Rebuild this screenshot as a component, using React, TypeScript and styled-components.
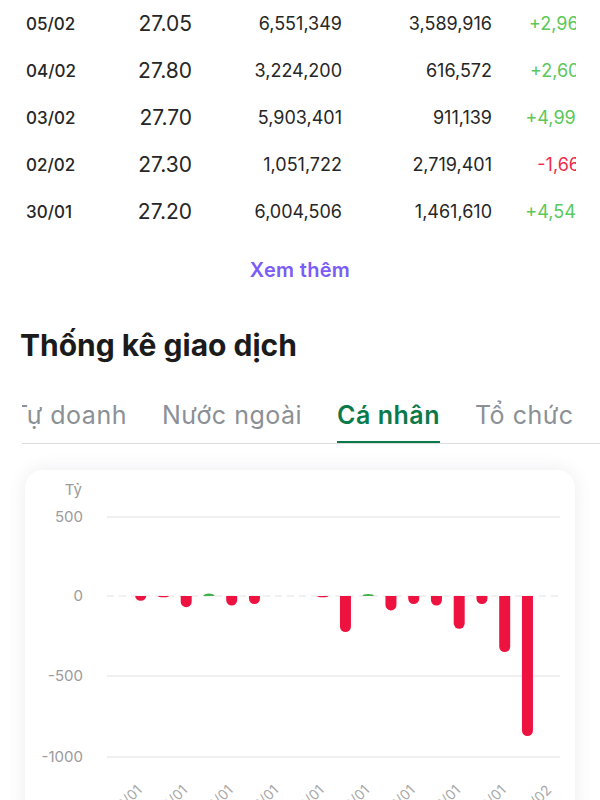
import React from "react";
import styled, { createGlobalStyle } from "styled-components";

const GlobalStyle = createGlobalStyle`
  body {
    margin: 0;
    background: #fff;
    font-family: Inter, "Noto Sans", sans-serif;
    color: #222;
  }
`;

const Page = styled.main`
  width: 600px;
  overflow: hidden;
`;

const TableScroll = styled.div`
  margin-right: 24px;
  padding-left: 26px;
  overflow: hidden;
`;

const Grid = styled.div`
  display: grid;
  grid-template-columns: 60px 106px 150px 150px 133px;
  width: 599px;
`;

const Row = styled.div`
  display: contents;
`;

const Cell = styled.div<{ $tone?: "up" | "down"; $big?: boolean; $left?: boolean }>`
  height: 47px;
  display: flex;
  align-items: center;
  justify-content: ${({ $left }) => ($left ? "flex-start" : "flex-end")};
  white-space: nowrap;
  font-size: ${({ $big, $left }) => ($big ? "21px" : $left ? "17px" : "18px")};
  font-weight: ${({ $left }) => ($left ? 500 : 400)};
  color: ${({ $tone }) =>
    $tone === "up" ? "#5ac85a" : $tone === "down" ? "#ef2b4b" : "#262626"};
`;

const More = styled.button`
  display: block;
  margin: 23px auto 0;
  border: 0;
  background: none;
  padding: 0;
  font-family: inherit;
  font-size: 20px;
  line-height: 24px;
  letter-spacing: 0.3px;
  font-weight: 600;
  color: #7b5cf6;
`;

const Title = styled.h2`
  margin: 45px 0 0 20px;
  font-size: 30px;
  line-height: 36px;
  font-weight: 700;
  color: #1b1b1b;
`;

const TabsScroll = styled.div`
  margin: 37px 0 0 22px;
  overflow: hidden;
  border-bottom: 1px solid #dcdcdc;
`;

// $scroll: how far the strip is scrolled to the left
const TabTrack = styled.div<{ $scroll: number }>`
  display: flex;
  gap: 35px;
  width: max-content;
  transform: translateX(-${({ $scroll }) => $scroll}px);
`;

const Tab = styled.div<{ $active?: boolean }>`
  position: relative;
  padding-bottom: 13px;
  font-size: 25px;
  line-height: 30px;
  letter-spacing: 0.5px;
  white-space: nowrap;
  font-weight: ${({ $active }) => ($active ? 600 : 400)};
  color: ${({ $active }) => ($active ? "#0b7a4b" : "#8b9096")};

  &::after {
    content: "";
    position: absolute;
    left: 0;
    right: 0;
    bottom: 0;
    height: 2px;
    background: ${({ $active }) => ($active ? "#0b7a4b" : "transparent")};
  }
`;

const Card = styled.section`
  margin: 26px 25px 0;
  height: 360px;
  background: #fff;
  border-radius: 18px;
  box-shadow: 0 0 20px rgba(20, 30, 60, 0.08);
  overflow: hidden;
`;

const rows = [
  ["05/02", "27.05", "6,551,349", "3,589,916", "+2,961,433"],
  ["04/02", "27.80", "3,224,200", "616,572", "+2,607,628"],
  ["03/02", "27.70", "5,903,401", "911,139", "+4,992,262"],
  ["02/02", "27.30", "1,051,722", "2,719,401", "-1,667,679"],
  ["30/01", "27.20", "6,004,506", "1,461,610", "+4,542,896"],
];

const tabs = ["Tự doanh", "Nước ngoài", "Cá nhân", "Tổ chức"];

// net value per day (tỷ), oldest first
const values = [-30, -8, -70, 15, -60, -50, 0, 0, -8, -225, 12, -90, -50, -60, -205, -50, -350, -875, 0];
const dates = ["08/01", "12/01", "14/01", "16/01", "20/01", "22/01", "26/01", "28/01", "30/01", "03/02", "05/02"];

const Y0 = 126;
const SCALE = 80 / 500;
const slotX = (i: number) => 115.7 + 22.75 * i;

function barPath(cx: number, v: number, w = 11) {
  const r = w / 2;
  const h = Math.abs(v) * SCALE;
  const dir = v < 0 ? 1 : -1;
  const sweep = v < 0 ? 0 : 1;
  if (h < r) {
    return `M${cx - r} ${Y0} A${r} ${h} 0 0 ${sweep} ${cx + r} ${Y0} Z`;
  }
  const yb = Y0 + dir * (h - r);
  return `M${cx - r} ${Y0} V${yb} A${r} ${r} 0 0 ${sweep} ${cx + r} ${yb} V${Y0} Z`;
}

const Chart: React.FC = () => {
  const ticks = [
    { label: "500", y: 47 },
    { label: "0", y: Y0 },
    { label: "-500", y: 206 },
    { label: "-1000", y: 287 },
  ];
  return (
    <svg width="550" height="360" viewBox="0 0 550 360">
      <text x="57" y="25" textAnchor="end" fontSize="15" fill="#9b9b9b">Tỷ</text>
      {ticks.map((t) => (
        <g key={t.label}>
          <text x="58" y={t.y + 5} textAnchor="end" fontSize="15" fill="#9b9b9b">
            {t.label}
          </text>
          <line
            x1="82"
            x2="535"
            y1={t.y}
            y2={t.y}
            stroke="#ebebeb"
            strokeWidth="1.5"
            strokeDasharray={t.label === "0" ? "7 5" : undefined}
          />
        </g>
      ))}
      {values.map((v, i) =>
        v === 0 ? null : (
          <path key={i} d={barPath(slotX(i), v)} fill={v < 0 ? "#ee1241" : "#3fb04a"} />
        )
      )}
      {values.map((_, i) => {
        if (i % 2 !== 0) return null;
        const x = slotX(i) + 2;
        const y = 321;
        return (
          <text
            key={"d" + i}
            x={x}
            y={y}
            textAnchor="end"
            fontSize="14"
            fill="#a8a8a8"
            transform={`rotate(-45 ${x} ${y})`}
          >
            {dates[i / 2]}
          </text>
        );
      })}
    </svg>
  );
};

const App: React.FC = () => {
  return (
    <Page>
      <GlobalStyle />
      <TableScroll>
        <Grid>
          {rows.map((r) => (
            <Row key={r[0]}>
              <Cell $left>{r[0]}</Cell>
              <Cell $big>{r[1]}</Cell>
              <Cell>{r[2]}</Cell>
              <Cell>{r[3]}</Cell>
              <Cell $tone={r[4].startsWith("-") ? "down" : "up"}>{r[4]}</Cell>
            </Row>
          ))}
        </Grid>
      </TableScroll>
      <More>Xem thêm</More>
      <Title>Thống kê giao dịch</Title>
      <TabsScroll>
        <TabTrack $scroll={10}>
          {tabs.map((t) => (
            <Tab key={t} $active={t === "Cá nhân"}>
              {t}
            </Tab>
          ))}
        </TabTrack>
      </TabsScroll>
      <Card>
        <Chart />
      </Card>
    </Page>
  );
};

export default App;
